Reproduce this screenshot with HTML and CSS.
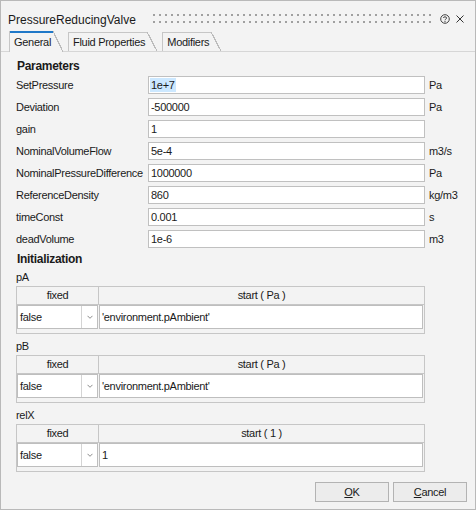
FILE: index.html
```html
<!DOCTYPE html>
<html>
<head>
<meta charset="utf-8">
<title>PressureReducingValve</title>
<link rel="stylesheet" href="styles.css">
</head>
<body>
<div class="window">
  <div class="titlebar">
    <span class="title">PressureReducingValve</span>
    <div class="grip"></div>
    <svg class="help" width="10" height="10" viewBox="0 0 10 10">
      <circle cx="5" cy="5" r="4.3" fill="none" stroke="#444" stroke-width="1"/>
      <path d="M3.4 4 C3.4 2.4 6.6 2.4 6.6 4 C6.6 5.1 5 5 5 6.3" fill="none" stroke="#444" stroke-width="1"/>
      <circle cx="5" cy="7.7" r="0.65" fill="#444"/>
    </svg>
    <svg class="close" width="8" height="8" viewBox="0 0 8 8">
      <path d="M0.5 0.5 L7.5 7.5 M7.5 0.5 L0.5 7.5" stroke="#333" stroke-width="1"/>
    </svg>
  </div>
  <div class="tabbar">
    <div class="tab active">General</div>
    <div class="tab">Fluid Properties</div>
    <div class="tab">Modifiers</div>
  </div>
  <div class="panel">
    <div class="heading">Parameters</div>
    <div class="params">
      <div class="label">SetPressure</div><div class="field"><span class="sel">1e+7</span></div><div class="unit">Pa</div>
      <div class="label">Deviation</div><div class="field">-500000</div><div class="unit">Pa</div>
      <div class="label">gain</div><div class="field">1</div><div class="unit"></div>
      <div class="label">NominalVolumeFlow</div><div class="field">5e-4</div><div class="unit">m3/s</div>
      <div class="label">NominalPressureDifference</div><div class="field">1000000</div><div class="unit">Pa</div>
      <div class="label">ReferenceDensity</div><div class="field">860</div><div class="unit">kg/m3</div>
      <div class="label">timeConst</div><div class="field">0.001</div><div class="unit">s</div>
      <div class="label">deadVolume</div><div class="field">1e-6</div><div class="unit">m3</div>
    </div>
    <div class="heading init">Initialization</div>
    <div class="group">
      <div class="glabel">pA</div>
      <div class="table">
        <div class="thead"><div class="th c1">fixed</div><div class="th c2">start ( Pa )</div></div>
        <div class="trow">
          <div class="combo"><span class="cval">false</span><span class="carrow"><svg width="6" height="4" viewBox="0 0 6 4"><path d="M0.5 0.8 L3 3.3 L5.5 0.8" fill="none" stroke="#8c8c8c" stroke-width="1"/></svg></span></div>
          <div class="tinput">'environment.pAmbient'</div>
        </div>
      </div>
    </div>
    <div class="group">
      <div class="glabel">pB</div>
      <div class="table">
        <div class="thead"><div class="th c1">fixed</div><div class="th c2">start ( Pa )</div></div>
        <div class="trow">
          <div class="combo"><span class="cval">false</span><span class="carrow"><svg width="6" height="4" viewBox="0 0 6 4"><path d="M0.5 0.8 L3 3.3 L5.5 0.8" fill="none" stroke="#8c8c8c" stroke-width="1"/></svg></span></div>
          <div class="tinput">'environment.pAmbient'</div>
        </div>
      </div>
    </div>
    <div class="group">
      <div class="glabel">relX</div>
      <div class="table">
        <div class="thead"><div class="th c1">fixed</div><div class="th c2">start ( 1 )</div></div>
        <div class="trow">
          <div class="combo"><span class="cval">false</span><span class="carrow"><svg width="6" height="4" viewBox="0 0 6 4"><path d="M0.5 0.8 L3 3.3 L5.5 0.8" fill="none" stroke="#8c8c8c" stroke-width="1"/></svg></span></div>
          <div class="tinput">1</div>
        </div>
      </div>
    </div>
  </div>
  <div class="buttons">
    <button class="btn"><u>O</u>K</button>
    <button class="btn"><u>C</u>ancel</button>
  </div>
</div>
</body>
</html>
```
FILE: styles.css
```css
* { box-sizing: border-box; }
html, body { margin: 0; padding: 0; }
body {
  font-family: "Liberation Sans", Arial, sans-serif;
  font-size: 11px;
  letter-spacing: -0.3px;
  color: #1a1a1a;
  background: #f3f3f3;
}
.window {
  width: 476px;
  height: 510px;
  border: 1px solid #b9b9b9;
  background: #f3f3f3;
  display: flex;
  flex-direction: column;
}
.titlebar {
  display: flex;
  align-items: flex-start;
  height: 30px;
  padding: 12px 11px 0 7px;
  flex: none;
}
.title {
  font-size: 12px;
  line-height: 14px;
  letter-spacing: 0;
}
.grip {
  flex: 1;
  height: 9px;
  margin: 1px 8px 0 13px;
  background-image:
    linear-gradient(90deg, #f3f3f3 4px, transparent 4px),
    linear-gradient(#a0a0a0 2px, transparent 2px);
  background-size: 6px 100%, 100% 7px;
}
.help { margin-top: 1px; flex: none; }
.close { margin: 2px 0 0 6px; flex: none; }

.tabbar {
  display: flex;
  align-items: flex-end;
  gap: 5px;
  height: 21px;
  padding-left: 8px;
  border-bottom: 1px solid #d6d6d6;
  flex: none;
}
.tab {
  height: 19px;
  padding: 1px 12px 0 4px;
  line-height: 18px;
  border-left: 1px solid #c6c6c6;
  white-space: nowrap;
  background:
    linear-gradient(#c6c6c6, #c6c6c6) left top / calc(100% - 10px) 1px no-repeat,
    linear-gradient(to top right, transparent calc(50% - 0.6px), #bcbcbc calc(50% - 0.6px), #bcbcbc calc(50% + 0.6px), transparent calc(50% + 0.6px)) right top / 10px 100% no-repeat;
}
.tab.active {
  height: 21px;
  margin-bottom: -1px;
  padding-top: 2px;
  background:
    linear-gradient(#1f78c8, #1f78c8) left top / calc(100% - 10px) 2px no-repeat,
    linear-gradient(to top right, transparent calc(50% - 0.6px), #bcbcbc calc(50% - 0.6px), #bcbcbc calc(50% + 0.6px), transparent calc(50% + 0.6px)) right top / 10px 100% no-repeat,
    #f3f3f3;
}

.panel { padding: 7px 15px 0 15px; }
.heading {
  font-weight: bold;
  font-size: 12px;
  line-height: 14px;
  padding-left: 1px;
}
.params {
  display: grid;
  grid-template-columns: 128px 277px auto;
  column-gap: 4px;
  row-gap: 4px;
  margin-top: 3px;
}
.label, .unit { line-height: 18px; white-space: nowrap; }
.field {
  height: 18px;
  border: 1px solid #c0c0c0;
  background: #fff;
  padding-left: 2px;
  line-height: 16px;
  white-space: nowrap;
}
.sel {
  display: inline-block;
  background: #cce8ff;
  margin-left: -1px;
  padding: 0 1px;
  line-height: 14px;
}
.init { margin-top: 4px; }
.group { margin-top: 4px; }
.group + .group { margin-top: 5px; }
.glabel { line-height: 14px; margin-bottom: 2px; }
.table {
  width: 409px;
  height: 48px;
  border: 1px solid #c6c6c6;
}
.thead {
  display: flex;
  height: 18px;
  border-bottom: 1px solid #c6c6c6;
  line-height: 17px;
}
.th { text-align: center; }
.c1 { width: 82px; border-right: 1px solid #c6c6c6; }
.c2 { flex: 1; }
.trow { display: flex; height: 24px; }
.combo {
  width: 81px;
  display: flex;
  border: 1px solid #bebebe;
  background: #fff;
}
.cval { flex: 1; padding-left: 2px; line-height: 22px; }
.carrow {
  width: 16px;
  border-left: 1px solid #d4d4d4;
  display: flex;
  align-items: center;
  justify-content: center;
}
.tinput {
  flex: 1;
  margin: 0 1px;
  border: 1px solid #bebebe;
  background: #fff;
  padding-left: 2px;
  line-height: 22px;
  white-space: nowrap;
}

.buttons {
  margin-top: auto;
  display: flex;
  justify-content: flex-end;
  gap: 4px;
  padding: 0 8px 7px 0;
  flex: none;
}
.btn {
  width: 74px;
  height: 20px;
  border: 1px solid #b3b3b3;
  background: #ececec;
  font: inherit;
  letter-spacing: inherit;
  color: #1a1a1a;
  padding: 0;
}
```
